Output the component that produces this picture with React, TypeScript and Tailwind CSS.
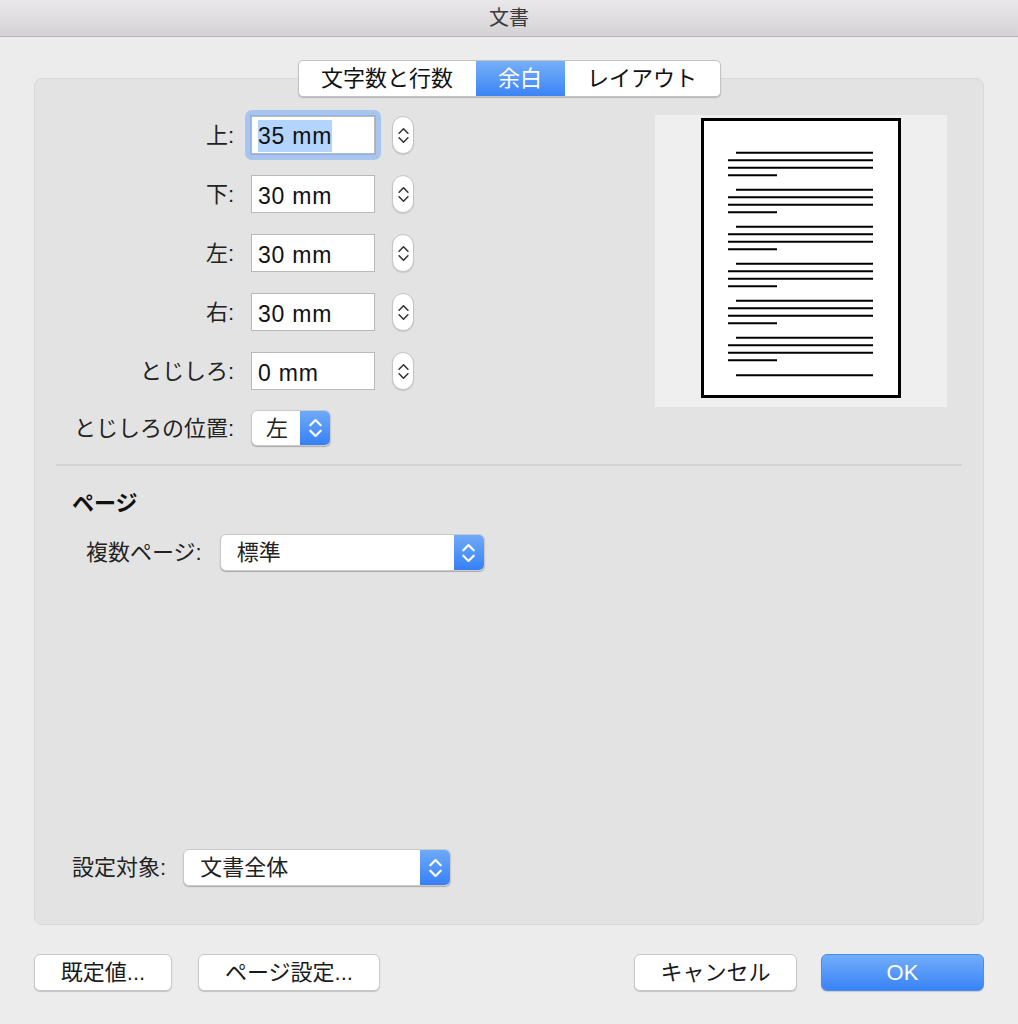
import React from "react";

function Chevrons({ color = "#fff", w = 12, h = 22, sw = 2 }: { color?: string; w?: number; h?: number; sw?: number }) {
  return (
    <svg width={w} height={h} viewBox="0 0 12 22" fill="none">
      <path d="M1.2 8.5 L6 3.7 L10.8 8.5" stroke={color} strokeWidth={sw} strokeLinecap="round" strokeLinejoin="round" />
      <path d="M1.2 13.5 L6 18.3 L10.8 13.5" stroke={color} strokeWidth={sw} strokeLinecap="round" strokeLinejoin="round" />
    </svg>
  );
}

function Stepper() {
  return (
    <div className="w-[22px] h-[38px] rounded-full bg-white border border-[#c4c4c4] shadow-[0_1px_1px_rgba(0,0,0,0.12)] flex items-center justify-center">
      <Chevrons color="#333" w={11} h={21} sw={1.7} />
    </div>
  );
}

function Field({ value, focused = false }: { value: string; focused?: boolean }) {
  const inner = (
    <div className="w-[124px] h-[38px] bg-white border border-[#b9b9b9] flex items-center pl-[6px] pt-[5px] text-[23px] tracking-[0.8px] text-[#111]">
      {focused ? <span className="bg-[#b3d4fc] leading-[31px] -mt-[4px] pt-[1px]">{value}</span> : <span>{value}</span>}
    </div>
  );
  if (focused) {
    return <div className="-m-[6px] p-[5px] rounded-[7px] bg-[#a7c5ee]"><div className="border border-[#8fb3e6]">{inner}</div></div>;
  }
  return inner;
}

function Row({ label, value, focused }: { label: string; value: string; focused?: boolean }) {
  return (
    <div className="flex items-center h-[38px]">
      <div className="w-[200px] text-right pr-[1px] text-[22px] text-[#222]">{label}</div>
      <div className="ml-[16px]">
        <Field value={value} focused={focused} />
      </div>
      <div className="ml-[17px]">
        <Stepper />
      </div>
    </div>
  );
}

function Popup({ text, width, height = 37, textPad = 16 }: { text: string; width: number; height?: number; textPad?: number }) {
  return (
    <div
      className="flex bg-white rounded-[6px] border border-[#c9c9c9] shadow-[0_1px_1px_rgba(0,0,0,0.25)] overflow-hidden"
      style={{ width, height }}
    >
      <div className="flex-1 flex items-center text-[22px] text-[#222]" style={{ paddingLeft: textPad }}>
        {text}
      </div>
      <div className="w-[30px] h-full bg-gradient-to-b from-[#6faaf8] to-[#3680f6] flex items-center justify-center">
        <Chevrons w={13} h={24} />
      </div>
    </div>
  );
}

function Button({ children, width, primary = false }: { children: React.ReactNode; width: number; primary?: boolean }) {
  return (
    <div
      className={
        primary
          ? "h-[37px] rounded-[6px] bg-gradient-to-b from-[#72adf9] to-[#3883f6] border border-[#4a8cf0] text-white text-[22px] flex items-center justify-center shadow-[0_1px_1px_rgba(0,0,0,0.15)]"
          : "h-[37px] rounded-[6px] bg-white border border-[#c8c8c8] text-[#1a1a1a] text-[22px] flex items-center justify-center shadow-[0_1px_1px_rgba(0,0,0,0.18)]"
      }
      style={{ width }}
    >
      {children}
    </div>
  );
}

function PagePreview() {
  const lines: React.ReactNode[] = [];
  const groups = [152.7, 189.7, 226.7, 263.7, 300.7, 337.7];
  groups.forEach((g, gi) => {
    const y0 = g - 118;
    lines.push(<line key={`a${gi}`} x1={35} x2={172} y1={y0} y2={y0} />);
    lines.push(<line key={`b${gi}`} x1={27} x2={172} y1={y0 + 7.5} y2={y0 + 7.5} />);
    lines.push(<line key={`c${gi}`} x1={27} x2={172} y1={y0 + 15} y2={y0 + 15} />);
    lines.push(<line key={`d${gi}`} x1={27} x2={76} y1={y0 + 22.5} y2={y0 + 22.5} />);
  });
  lines.push(<line key="last" x1={35} x2={172} y1={375.3 - 118} y2={375.3 - 118} />);
  return (
    <div className="w-[292px] h-[292px] bg-[#efefef] flex justify-center pt-[3px]">
      <div className="w-[200px] h-[280px] bg-white border-[3px] border-black">
        <svg width="194" height="274" viewBox="3 3 194 274" stroke="#000" strokeWidth="2">
          {lines}
        </svg>
      </div>
    </div>
  );
}

export default function App() {
  return (
    <div className="w-[1018px] h-[1024px] bg-[#ececec] flex flex-col font-['Liberation_Sans','Noto_Sans_CJK_JP',sans-serif]">
      {/* Title bar */}
      <div className="h-[37px] shrink-0 bg-gradient-to-b from-[#eae8ea] to-[#d4d2d4] border-b border-[#b3b3b3] flex items-center justify-center text-[20px] text-[#3a3a3a]">
        文書
      </div>

      <div className="flex flex-col px-[34px]">
        {/* Tabs */}
        <div className="flex justify-center pt-[23px] relative z-10">
          <div className="flex h-[37px] rounded-[5px] border border-[#c3c3c3] bg-white shadow-[0_1px_1px_rgba(0,0,0,0.2)] overflow-hidden text-[22px]">
            <div className="w-[177px] flex items-center justify-center text-[#111]">文字数と行数</div>
            <div className="w-[89px] flex items-center justify-center text-white bg-gradient-to-b from-[#76aff9] to-[#3a84f6]">余白</div>
            <div className="w-[155px] flex items-center justify-center text-[#111]">レイアウト</div>
          </div>
        </div>

        {/* Panel */}
        <div className="-mt-[19px] h-[847px] rounded-[8px] bg-[#e3e3e3] border border-[#d8d8d8] flex flex-col">
          <div className="flex justify-between pt-[36px] pr-[36px]">
            <div className="flex flex-col gap-[21px] mt-[1px]">
              <Row label="上:" value="35 mm" focused />
              <Row label="下:" value="30 mm" />
              <Row label="左:" value="30 mm" />
              <Row label="右:" value="30 mm" />
              <Row label="とじしろ:" value="0 mm" />
              <div className="flex items-center h-[36px] -mt-[1px]">
                <div className="w-[200px] text-right pr-[1px] text-[22px] text-[#222]">とじしろの位置:</div>
                <div className="ml-[16px]">
                  <Popup text="左" width={80} height={36} textPad={14} />
                </div>
              </div>
            </div>
            <PagePreview />
          </div>

          <div className="mx-[21px] mt-[18px] h-[2px] bg-[#d3d3d3]" />

          <div className="pl-[37px] mt-[23px] text-[22px] font-bold text-[#111] leading-[30px]">ページ</div>

          <div className="flex items-center pl-[51px] mt-[15px]">
            <div className="text-[22px] text-[#222]">複数ページ:</div>
            <div className="ml-[18px]">
              <Popup text="標準" width={265} />
            </div>
          </div>

          <div className="flex-1" />

          <div className="flex items-center pl-[37px] mb-[38px]">
            <div className="text-[22px] text-[#222]">設定対象:</div>
            <div className="ml-[17px]">
              <Popup text="文書全体" width={268} />
            </div>
          </div>
        </div>

        {/* Bottom buttons */}
        <div className="flex mt-[29px]">
          <Button width={138}>既定値...</Button>
          <div className="ml-[26px]">
            <Button width={182}>ページ設定...</Button>
          </div>
          <div className="flex-1" />
          <Button width={163}>キャンセル</Button>
          <div className="ml-[24px]">
            <Button width={163} primary>OK</Button>
          </div>
        </div>
      </div>
    </div>
  );
}
